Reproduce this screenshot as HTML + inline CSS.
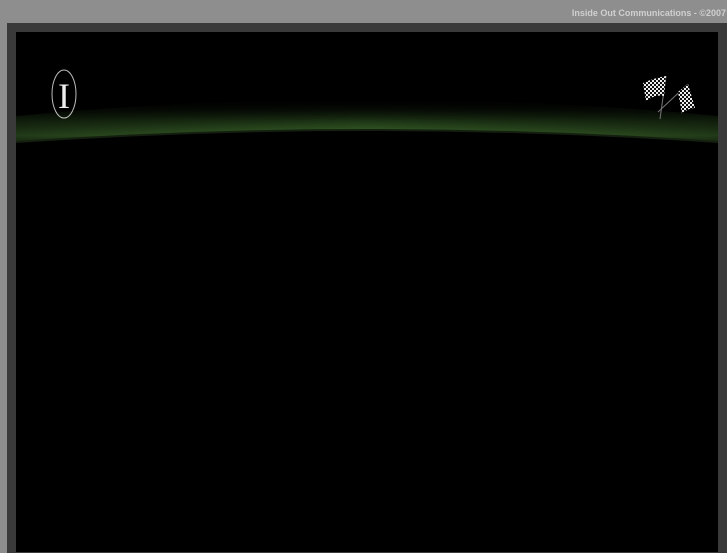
<!DOCTYPE html>
<html><head><style>
html,body{margin:0;padding:0;width:727px;height:545px;overflow:hidden;background:#8e8e8e;font-family:"Liberation Sans",sans-serif}
.frame{position:absolute;left:7px;top:23px;width:720px;height:530px;background:#3a3a3a}
.inner{position:absolute;left:16px;top:32px;width:702px;height:520px;background:#000;overflow:hidden}
.t{position:absolute;right:1px;top:8px;font-size:9px;font-weight:bold;color:#d0d0d0}
</style></head><body>
<div class="t">Inside Out Communications - ©2007</div>
<div class="frame"></div>
<div class="inner">
<svg width="702" height="140" style="position:absolute;left:0;top:0">
<defs>
<linearGradient id="v" x1="0" y1="0" x2="0" y2="1">
<stop offset="0" stop-color="#000" stop-opacity="0"/>
<stop offset="0.5" stop-color="#1c3314"/>
<stop offset="0.85" stop-color="#3d6a2c"/>
<stop offset="1" stop-color="#2a4a1e"/>
</linearGradient>
<linearGradient id="h" x1="0" y1="0" x2="1" y2="0">
<stop offset="0" stop-color="#fff" stop-opacity="0.55"/>
<stop offset="0.5" stop-color="#fff" stop-opacity="1"/>
<stop offset="1" stop-color="#fff" stop-opacity="0.55"/>
</linearGradient>
<mask id="m"><rect width="702" height="140" fill="url(#h)"/></mask>
</defs>
<g mask="url(#m)">
<path d="M0 84 Q351 50 702 84 L702 110 Q351 86 0 110 Z" fill="url(#v)"/>
</g>
<path d="M0 110 Q351 86 702 110" stroke="#141f10" stroke-width="2" fill="none"/>
<ellipse cx="48" cy="62" rx="12" ry="24" fill="none" stroke="#bbb" stroke-width="1"/>
<text x="48" y="76" text-anchor="middle" font-family="Liberation Serif,serif" font-size="36" fill="#eee">I</text>
<g transform="translate(626,42)">
<line x1="24" y1="2" x2="18" y2="45" stroke="#777" stroke-width="1"/>
<line x1="46" y1="10" x2="16" y2="38" stroke="#777" stroke-width="1"/>
<defs><pattern id="c" width="4" height="4" patternUnits="userSpaceOnUse"><rect width="4" height="4" fill="#111"/><rect width="2" height="2" fill="#eee"/><rect x="2" y="2" width="2" height="2" fill="#eee"/></pattern></defs>
<path d="M1 9 Q12 4 24 2 L22 22 Q14 20 4 27 Z" fill="url(#c)"/>
<path d="M36 18 L46 10 L53 34 Q46 34 40 40 Z" fill="url(#c)"/>
</g>
</svg>
</div>
</body></html>
